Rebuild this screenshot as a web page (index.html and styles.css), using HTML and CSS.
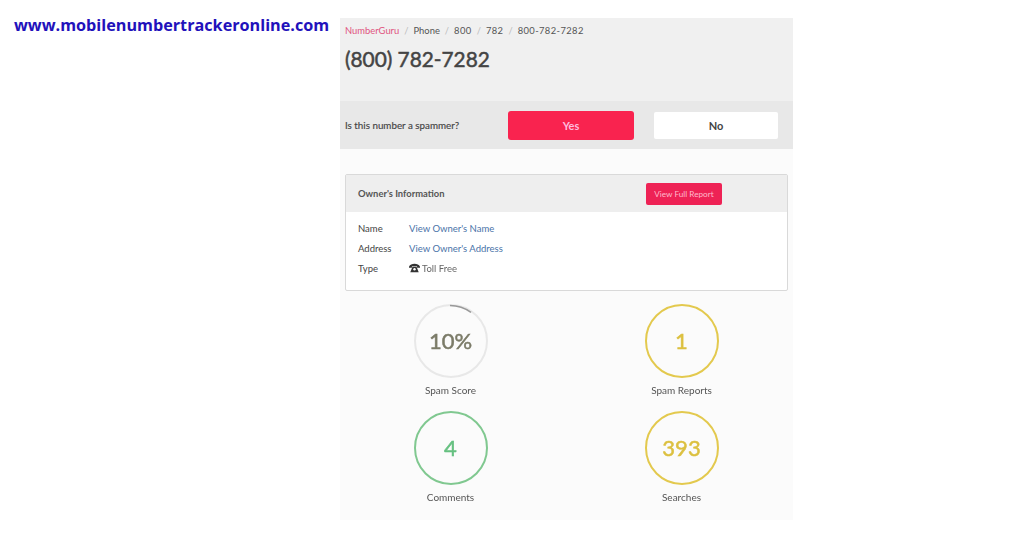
FILE: index.html
```html
<!DOCTYPE html>
<html lang="en">
<head>
<meta charset="UTF-8">
<title>(800) 782-7282</title>
<link rel="stylesheet" href="styles.css">
</head>
<body>

<div class="site">www.mobilenumbertrackeronline.com</div>

<div class="shot">
    <div class="top">
        <div class="crumbs">
            <a class="home">NumberGuru</a><i>/</i><span>Phone</span><i>/</i><span class="num">800</span><i>/</i><span class="num">782</span><i>/</i><span class="num">800-782-7282</span>
        </div>
        <h1>(800) 782-7282</h1>
    </div>

    <div class="ask">
        <p>Is this number a spammer?</p>
        <button class="yes">Yes</button>
        <button class="no">No</button>
    </div>

    <div class="card">
        <div class="card-head">
            <b>Owner's Information</b>
            <button class="report">View Full Report</button>
        </div>
        <div class="card-body">
            <div class="row"><span>Name</span><a>View Owner's Name</a></div>
            <div class="row"><span>Address</span><a>View Owner's Address</a></div>
            <div class="row"><span>Type</span><em>
                <svg class="phone" viewBox="0 0 12 10"><path d="M0 3.6C1 1.2 3.4.4 6 .4s5 .8 6 3.2v1.2H8.8V3H3.2v1.8H0z"/><path d="M3.8 3.6h4.4L10.6 9.6H1.4z"/><circle cx="6" cy="6.4" r="1.3" fill="#fff"/></svg>
                Toll Free</em></div>
        </div>
    </div>

    <div class="stats">
        <div class="stat">
            <div class="ring grey">10%
                <svg class="arc" viewBox="0 0 74 74"><path d="M37 1.5A35.5 35.5 0 0 1 58 8.4"/></svg>
            </div>
            <span>Spam Score</span>
        </div>
        <div class="stat">
            <div class="ring yellow">1</div>
            <span>Spam Reports</span>
        </div>
        <div class="stat">
            <div class="ring green">4</div>
            <span>Comments</span>
        </div>
        <div class="stat">
            <div class="ring yellow">393</div>
            <span>Searches</span>
        </div>
    </div>
</div>

</body>
</html>
```

FILE: styles.css
```css
body { margin: 0; background: #fff; display: flex; align-items: flex-start; font-family: Lato, sans-serif; }
.site { width: 326px; padding: 14px 0 0 14px; font: bold 16.2px "Open Sans", sans-serif; color: #2211bb; white-space: nowrap; }
.shot { width: 453px; height: 502px; margin-top: 18px; background: #fbfbfb; color: #444; filter: blur(0.45px); }

.top { height: 83px; background: #f0f0f0; padding-left: 5px; box-sizing: border-box; }
.crumbs { padding-top: 6px; font-size: 9.4px; line-height: 13px; color: #555; }
.crumbs .home { color: #e0557f; }
.crumbs i { font-style: normal; color: #bbb; margin: 0 5px; }
.crumbs .num { letter-spacing: 0.4px; }
h1 { margin: 8px 0 0; font-size: 20.8px; line-height: 28px; font-weight: normal; color: #444; -webkit-text-stroke: 0.5px #444; }

.ask { height: 48px; background: #e8e8e8; display: flex; align-items: center; padding-left: 5px; }
.ask p { margin: 0; width: 163px; font-size: 9.8px; color: #444; -webkit-text-stroke: 0.15px #444; }
button { border: 0; font-family: Lato, sans-serif; }
.yes { width: 126px; height: 29px; background: #f9234f; color: #fbd; border-radius: 3px; font-size: 11px; font-weight: bold; }
.no { width: 124px; height: 27px; margin-left: 20px; background: #fff; color: #444; border-radius: 2px; font-size: 11px; font-weight: bold; }

.card { margin: 25px 5px 0 5px; background: #fff; border: 1px solid #d9d9d9; border-radius: 2px; }
.card-head { height: 37px; background: #eeeeee; display: flex; align-items: center; padding-left: 12px; font-size: 9.4px; color: #555; }
.card-head b { width: 288px; }
.report { width: 76px; height: 22px; padding: 0; background: #ee2255; color: #fbc; border-radius: 2px; font-size: 8.2px; }
.card-body { padding: 6px 12px 12px; }
.row { display: flex; height: 20px; align-items: center; font-size: 9.5px; color: #444; }
.row span { width: 51px; }
.row a { color: #4a73a8; }
.row em { font-style: normal; color: #666; display: flex; align-items: center; gap: 2px; }
.phone { width: 11px; height: 10px; fill: #333; }

.stats { display: grid; grid-template-columns: 231px 231px; margin-top: 13px; margin-left: -5px; row-gap: 14px; }
.stat { display: flex; flex-direction: column; align-items: center; font-size: 10px; color: #555; }
.ring { position: relative; box-sizing: border-box; width: 74px; height: 74px; padding-bottom: 2px; border-radius: 50%; border: 2.5px solid; display: flex; align-items: center; justify-content: center; font-size: 22px; -webkit-text-stroke: 0.5px; margin-bottom: 6px; }
.stat span { line-height: 13px; }
.grey { border-color: #e8e8e8; color: #7b7b68; }
.yellow { border-color: #e3c94e; color: #dcc040; }
.green { border-color: #80c890; color: #66c080; }
.arc { position: absolute; top: -2.5px; left: -2.5px; width: 74px; height: 74px; fill: none; stroke: #999; stroke-width: 1.5; }
```
